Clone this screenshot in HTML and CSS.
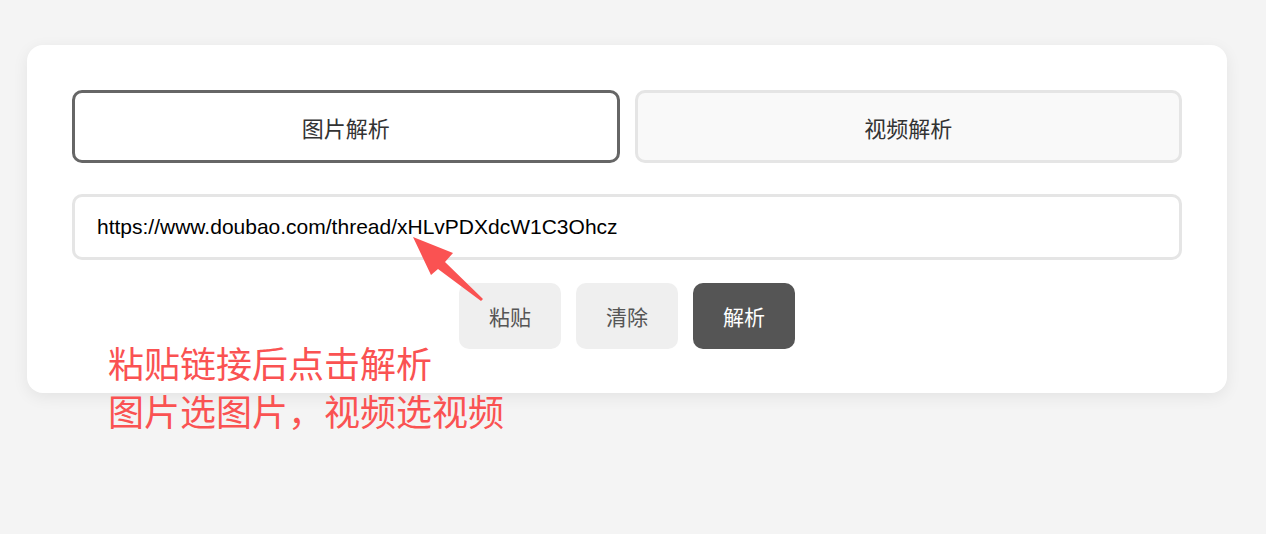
FILE: index.html
```html
<!DOCTYPE html>
<html>
<head>
  <title>解析</title>
  <link rel="stylesheet" href="styles.css">
</head>
<body>
  <div class="card">
    <div class="tabs">
      <button class="tab active">图片解析</button>
      <button class="tab">视频解析</button>
    </div>

    <input class="url-input" type="text" value="https://www.doubao.com/thread/xHLvPDXdcW1C3Ohcz">

    <div class="actions">
      <button class="btn">粘贴</button>
      <button class="btn">清除</button>
      <button class="btn btn-dark">解析</button>
    </div>

    <!-- annotation over the card -->
    <div class="note">粘贴链接后点击解析<br>图片选图片，视频选视频</div>
  </div>

  <svg class="arrow" viewBox="405 230 85 75" width="85" height="75">
    <polygon points="413,237 453,253 445,262 483,299 481,301 438,269 431,275" fill="#fa5252"/>
  </svg>
</body>
</html>
```

FILE: styles.css
```css
body {
  margin: 0;
  padding: 45px 27px;
  background-color: #f4f4f4;
  font-family: "Liberation Sans", "Noto Sans CJK SC", sans-serif;
}

.card {
  position: relative;
  width: 1200px;
  box-sizing: border-box;
  padding: 45px 45px 44px;
  background-color: #fff;
  border-radius: 16px;
  box-shadow: 0 4px 16px rgba(0, 0, 0, 0.07);
}

.tabs {
  display: grid;
  grid-template-columns: 1fr 1fr;
  gap: 15px;
}

.tab {
  height: 73px;
  border: 3px solid #e5e5e5;
  border-radius: 10px;
  background-color: #f9f9f9;
  color: #333;
  font-family: "Noto Sans CJK SC", sans-serif;
  font-size: 22px;
  cursor: pointer;
}

.tab.active {
  border-color: #666;
  background-color: #fff;
}

.url-input {
  display: block;
  width: 100%;
  height: 66px;
  box-sizing: border-box;
  margin-top: 31px;
  padding: 0 22px;
  border: 3px solid #e5e5e5;
  border-radius: 10px;
  font-family: "Liberation Sans", sans-serif;
  font-size: 21px;
  color: #000;
  outline: none;
}

.actions {
  display: flex;
  justify-content: center;
  gap: 15px;
  margin-top: 23px;
}

.btn {
  width: 102px;
  height: 66px;
  border: none;
  border-radius: 10px;
  background-color: #efefef;
  color: #555;
  font-family: "Noto Sans CJK SC", sans-serif;
  font-size: 21px;
  cursor: pointer;
}

.btn-dark {
  background-color: #555;
  color: #fff;
}

.note {
  position: absolute;
  left: 81px;
  top: 293px;
  font-family: "Noto Sans CJK SC", sans-serif;
  font-size: 36px;
  line-height: 48px;
  color: #fa5252;
}

.arrow {
  position: absolute;
  left: 405px;
  top: 230px;
}
```
